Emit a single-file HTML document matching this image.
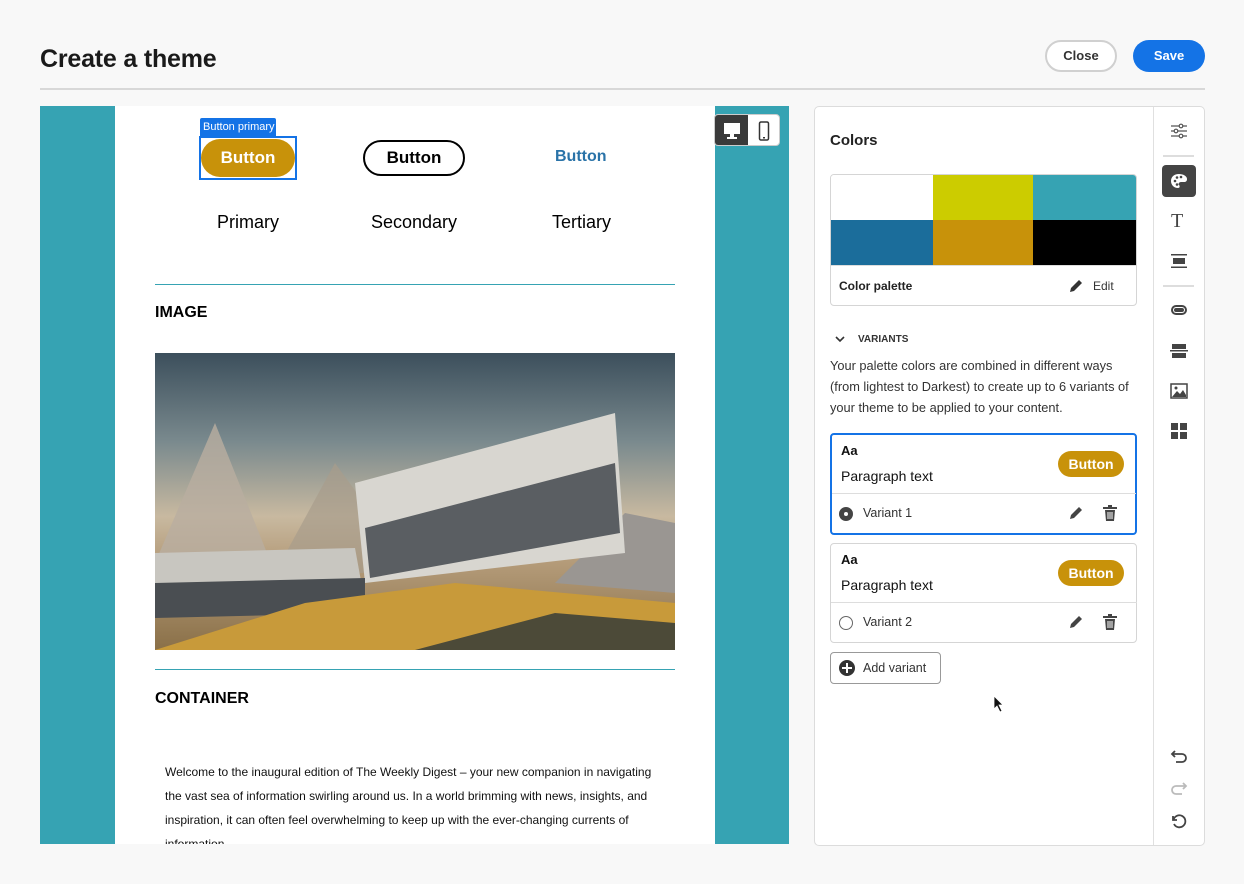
<!DOCTYPE html>
<html><head><meta charset="utf-8"><style>
*{box-sizing:border-box;margin:0;padding:0}
body{width:1244px;height:884px;background:#f8f8f8;font-family:"Liberation Sans",sans-serif;position:relative;overflow:hidden;color:#222}
.a{position:absolute}
.btn{position:absolute;border-radius:16px;font-size:14px;font-weight:bold;text-align:center;line-height:28px}
.sw{position:absolute;width:100px;height:45px}
.card{position:absolute;left:830px;width:307px;background:#fff;border:1px solid #d5d5d5;border-radius:4px}
.gb{position:absolute;left:1058px;width:66px;height:26px;border-radius:13px;background:#c8920a;color:#fff;font-weight:bold;font-size:14px;text-align:center;line-height:26px}
.ic{position:absolute;left:1170px}
</style></head><body>
<div class="a" style="left:40px;top:45px;font-size:25px;font-weight:bold;color:#1a1a1a;letter-spacing:-0.2px">Create a theme</div>
<div class="a" style="left:1045px;top:40px;width:72px;height:32px;border:2px solid #d0d0d0;border-radius:16px;background:#fff;font-size:13px;font-weight:bold;text-align:center;line-height:28px;color:#333">Close</div>
<div class="a" style="left:1133px;top:40px;width:72px;height:32px;border-radius:16px;background:#1473e6;color:#fff;font-size:13px;font-weight:bold;text-align:center;line-height:32px">Save</div>
<div class="a" style="left:40px;top:88px;width:1165px;height:2px;background:#d8d8d8"></div>

<div class="a" style="left:40px;top:106px;width:749px;height:738px;background:#36a3b3"></div>
<div class="a" style="left:115px;top:106px;width:600px;height:738px;background:#fff;overflow:hidden">
 <div class="a" style="left:85px;top:12px;width:76px;height:18px;background:#1473e6;color:#fff;font-size:11px;line-height:18px;padding-left:3px;border-radius:2px 2px 0 0">Button primary</div>
 <div class="a" style="left:84px;top:30px;width:98px;height:44px;border:2px solid #1473e6"></div>
 <div class="btn" style="left:86px;top:33px;width:94px;height:38px;background:#c8920a;color:#fff;border-radius:19px;line-height:38px;font-size:17px">Button</div>
 <div class="btn" style="left:248px;top:34px;width:102px;height:36px;border:2px solid #000;border-radius:18px;line-height:32px;font-size:17px;color:#000">Button</div>
 <div class="a" style="left:440px;top:42px;font-size:16px;font-weight:bold;color:#2a73a8">Button</div>
 <div class="a" style="left:102px;top:106px;font-size:18px;color:#000">Primary</div>
 <div class="a" style="left:256px;top:106px;font-size:18px;color:#000">Secondary</div>
 <div class="a" style="left:437px;top:106px;font-size:18px;color:#000">Tertiary</div>
 <div class="a" style="left:40px;top:178px;width:520px;height:1px;background:#36a3b3"></div>
 <div class="a" style="left:40px;top:198px;font-size:16px;font-weight:bold;color:#000">IMAGE</div>
 <div class="a" style="left:40px;top:247px;width:520px;height:297px;background:linear-gradient(180deg,#3c4f5c 0%,#7a8a8e 30%,#c8b9a0 55%,#b59c7a 70%,#8a7048 100%);overflow:hidden">
  <svg width="520" height="297" viewBox="0 0 520 297">
   <polygon points="0,210 60,70 120,220" fill="#b9aea0" opacity=".8"/>
   <polygon points="120,220 180,110 260,220" fill="#a89c8c" opacity=".7"/>
   <polygon points="400,230 470,160 520,170 520,240" fill="#9a9692"/>
   <polygon points="200,130 460,60 470,200 210,230" fill="#d8d6d0"/>
   <polygon points="210,175 460,110 465,180 215,225" fill="#5a5e62"/>
   <polygon points="0,200 200,195 210,250 0,260" fill="#c8c6c0"/>
   <polygon points="0,230 210,225 210,260 0,265" fill="#4a4e52"/>
   <polygon points="0,297 150,250 300,230 520,250 520,297" fill="#c89a3a"/>
   <polygon points="260,297 400,260 520,270 520,297" fill="#4c4a38"/>
  </svg>
 </div>
 <div class="a" style="left:40px;top:563px;width:520px;height:1px;background:#36a3b3"></div>
 <div class="a" style="left:40px;top:584px;font-size:16px;font-weight:bold;color:#000">CONTAINER</div>
 <div class="a" style="left:50px;top:654px;width:500px;font-size:12px;line-height:24px;color:#111">Welcome to the inaugural edition of The Weekly Digest – your new companion in navigating the vast sea of information swirling around us. In a world brimming with news, insights, and inspiration, it can often feel overwhelming to keep up with the ever-changing currents of information.</div>
</div>
<div class="a" style="left:714px;top:114px;width:66px;height:32px;border:1px solid #ccc;border-radius:4px;background:#fff;overflow:hidden">
 <div class="a" style="left:0;top:0;width:33px;height:32px;background:#3a3a3a"></div>
 <svg class="a" style="left:8px;top:7px" width="18" height="18" viewBox="0 0 18 18"><rect x="1" y="1" width="16" height="11" fill="#fff"/><rect x="7" y="12" width="4" height="3" fill="#fff"/><rect x="4" y="15" width="10" height="2" fill="#fff"/></svg>
 <svg class="a" style="left:43px;top:6px" width="12" height="20" viewBox="0 0 12 20"><rect x="1.5" y="1" width="9" height="18" rx="1.5" fill="none" stroke="#333" stroke-width="1.5"/><rect x="5" y="16" width="2" height="1.5" fill="#333"/></svg>
</div>

<div class="a" style="left:814px;top:106px;width:391px;height:740px;background:#fff;border:1px solid #dcdcdc;border-radius:5px"></div>
<div class="a" style="left:1153px;top:107px;width:1px;height:738px;background:#e0e0e0"></div>
<div class="a" style="left:830px;top:132px;font-size:15px;font-weight:bold;color:#222">Colors</div>
<div class="card" style="top:174px;height:132px;overflow:hidden">
 <div class="sw" style="left:0;top:0;width:102px;background:#fff"></div>
 <div class="sw" style="left:102px;top:0;background:#cccc00"></div>
 <div class="sw" style="left:202px;top:0;width:104px;background:#36a3b3"></div>
 <div class="sw" style="left:0;top:45px;width:102px;background:#1b6d9b"></div>
 <div class="sw" style="left:102px;top:45px;background:#c8920a"></div>
 <div class="sw" style="left:202px;top:45px;width:104px;background:#000"></div>
 <div class="a" style="left:0;top:90px;width:307px;height:1px;background:#ddd"></div>
 <div class="a" style="left:8px;top:104px;font-size:12px;font-weight:bold;color:#222">Color palette</div>
 <svg class="a" style="left:237px;top:103px" width="16" height="16" viewBox="0 0 16 16"><path d="M2 14 L3 10 L11 2 L14 5 L6 13 Z" fill="#333"/></svg>
 <div class="a" style="left:262px;top:104px;font-size:12px;color:#333">Edit</div>
</div>
<svg class="a" style="left:834px;top:334px" width="12" height="10" viewBox="0 0 12 10"><path d="M2 3 L6 7 L10 3" fill="none" stroke="#333" stroke-width="1.6"/></svg>
<div class="a" style="left:858px;top:334px;font-size:10px;font-weight:bold;color:#333">VARIANTS</div>
<div class="a" style="left:830px;top:355px;width:306px;font-size:12.8px;line-height:21px;color:#333">Your palette colors are combined in different ways (from lightest to Darkest) to create up to 6 variants of your theme to be applied to your content.</div>

<div class="card" style="top:433px;height:102px;border:2px solid #1473e6"></div>
<div class="a" style="left:841px;top:443px;font-size:13px;font-weight:bold;color:#111">Aa</div>
<div class="a" style="left:841px;top:468px;font-size:14px;color:#111">Paragraph text</div>
<div class="gb" style="top:451px">Button</div>
<div class="a" style="left:832px;top:493px;width:304px;height:1px;background:#ddd"></div>
<div class="a" style="left:839px;top:507px;width:14px;height:14px;border-radius:7px;background:#444"></div>
<div class="a" style="left:844px;top:512px;width:4px;height:4px;border-radius:2px;background:#fff"></div>
<div class="a" style="left:863px;top:506px;font-size:12.5px;color:#333">Variant 1</div>

<div class="card" style="top:543px;height:100px"></div>
<div class="a" style="left:841px;top:552px;font-size:13px;font-weight:bold;color:#111">Aa</div>
<div class="a" style="left:841px;top:577px;font-size:14px;color:#111">Paragraph text</div>
<div class="gb" style="top:560px">Button</div>
<div class="a" style="left:831px;top:602px;width:306px;height:1px;background:#ddd"></div>
<div class="a" style="left:839px;top:616px;width:14px;height:14px;border-radius:7px;border:1.5px solid #666"></div>
<div class="a" style="left:863px;top:615px;font-size:12.5px;color:#333">Variant 2</div>

<svg class="a" style="left:1068px;top:505px" width="16" height="16" viewBox="0 0 16 16"><path d="M2 14 L3 10 L11 2 L14 5 L6 13 Z" fill="#444"/></svg>
<svg class="a" style="left:1102px;top:505px" width="16" height="17" viewBox="0 0 16 17"><rect x="1" y="2" width="14" height="2" fill="#444"/><rect x="6" y="0" width="4" height="2" fill="#444"/><path d="M3 5 H13 L12 16 H4 Z" fill="#444"/><path d="M6 7 V14 M8 7 V14 M10 7 V14" stroke="#fff" stroke-width="1"/></svg>
<svg class="a" style="left:1068px;top:614px" width="16" height="16" viewBox="0 0 16 16"><path d="M2 14 L3 10 L11 2 L14 5 L6 13 Z" fill="#444"/></svg>
<svg class="a" style="left:1102px;top:614px" width="16" height="17" viewBox="0 0 16 17"><rect x="1" y="2" width="14" height="2" fill="#444"/><rect x="6" y="0" width="4" height="2" fill="#444"/><path d="M3 5 H13 L12 16 H4 Z" fill="#444"/><path d="M6 7 V14 M8 7 V14 M10 7 V14" stroke="#fff" stroke-width="1"/></svg>

<div class="a" style="left:830px;top:652px;width:111px;height:32px;border:1px solid #999;border-radius:4px;background:#fff"></div>
<div class="a" style="left:839px;top:660px;width:16px;height:16px;border-radius:8px;background:#333"></div>
<div class="a" style="left:846px;top:663px;width:2px;height:10px;background:#fff"></div>
<div class="a" style="left:842px;top:667px;width:10px;height:2px;background:#fff"></div>
<div class="a" style="left:863px;top:661px;font-size:12.5px;color:#333">Add variant</div>
<svg class="a" style="left:993px;top:695px" width="12" height="18" viewBox="0 0 12 18"><path d="M1 1 V14 L4 11 L7 17 L9 16 L6 10 H10 Z" fill="#111" stroke="#fff" stroke-width=".8"/></svg>

<svg class="ic" style="top:122px" width="18" height="18" viewBox="0 0 18 18" fill="none" stroke="#555" stroke-width="1.2"><path d="M1 4H17M1 9H17M1 14H17"/><circle cx="11" cy="4" r="1.8" fill="#fff"/><circle cx="6" cy="9" r="1.8" fill="#fff"/><circle cx="11" cy="14" r="1.8" fill="#fff"/></svg>
<div class="a" style="left:1163px;top:155px;width:31px;height:2px;background:#ddd"></div>
<div class="a" style="left:1162px;top:165px;width:34px;height:32px;border-radius:4px;background:#444"></div>
<svg class="a" style="left:1170px;top:172px" width="18" height="18" viewBox="0 0 18 18"><path d="M9 2C4 2 1 5 1 9c0 4 3 7 7 7 2 0 2-2 1-3-1-1 0-3 2-3h3c2 0 3-1 3-3 0-3-4-5-8-5z" fill="#fff"/><circle cx="5" cy="9" r="1.3" fill="#444"/><circle cx="7" cy="12.5" r="1.3" fill="#444"/><circle cx="7" cy="5.5" r="1.3" fill="#444"/><circle cx="11" cy="5" r="1.3" fill="#444"/></svg>
<div class="a" style="left:1171px;top:210px;font-size:20px;font-family:'Liberation Serif',serif;color:#444">T</div>
<svg class="ic" style="top:253px" width="18" height="16" viewBox="0 0 18 16"><rect x="1" y="1" width="16" height="1.5" fill="#444"/><rect x="3" y="5" width="12" height="6" fill="#444"/><rect x="1" y="13.5" width="16" height="1.5" fill="#444"/></svg>
<div class="a" style="left:1163px;top:285px;width:31px;height:2px;background:#ddd"></div>
<svg class="ic" style="top:304px" width="18" height="12" viewBox="0 0 18 12"><rect x="1" y="1" width="16" height="10" rx="5" fill="#444"/><rect x="3" y="3" width="12" height="6" rx="3" fill="#fff"/><rect x="4" y="4" width="10" height="4" rx="2" fill="#444"/></svg>
<svg class="ic" style="top:343px" width="18" height="16" viewBox="0 0 18 16"><rect x="2" y="1" width="14" height="5" fill="#444"/><rect x="0" y="7" width="18" height="1.5" fill="#444"/><rect x="2" y="10" width="14" height="5" fill="#444"/></svg>
<svg class="ic" style="top:383px" width="18" height="16" viewBox="0 0 18 16"><rect x="1" y="1" width="16" height="14" fill="none" stroke="#444" stroke-width="1.5"/><path d="M2 14 L7 8 L10 11 L13 7 L16 12 V14 Z" fill="#444"/><circle cx="6" cy="5" r="1.5" fill="#444"/></svg>
<svg class="ic" style="top:422px" width="18" height="18" viewBox="0 0 18 18" fill="#444"><rect x="1" y="1" width="7" height="7"/><rect x="10" y="1" width="7" height="7"/><rect x="1" y="10" width="7" height="7"/><rect x="10" y="10" width="7" height="7"/></svg>
<svg class="ic" style="top:748px" width="18" height="18" viewBox="0 0 18 18" fill="none" stroke="#444" stroke-width="1.8"><path d="M5 3 L2 6 L5 9"/><path d="M2 6 H12 a4 4 0 0 1 0 8 H6"/></svg>
<svg class="ic" style="top:780px" width="18" height="18" viewBox="0 0 18 18" fill="none" stroke="#bbb" stroke-width="1.8"><path d="M13 3 L16 6 L13 9"/><path d="M16 6 H6 a4 4 0 0 0 0 8 H12"/></svg>
<svg class="ic" style="top:812px" width="18" height="18" viewBox="0 0 18 18" fill="none" stroke="#444" stroke-width="1.8"><path d="M3 4 V8 H7"/><path d="M3.5 8 A6 6 0 1 1 4 12"/></svg>
</body></html>
